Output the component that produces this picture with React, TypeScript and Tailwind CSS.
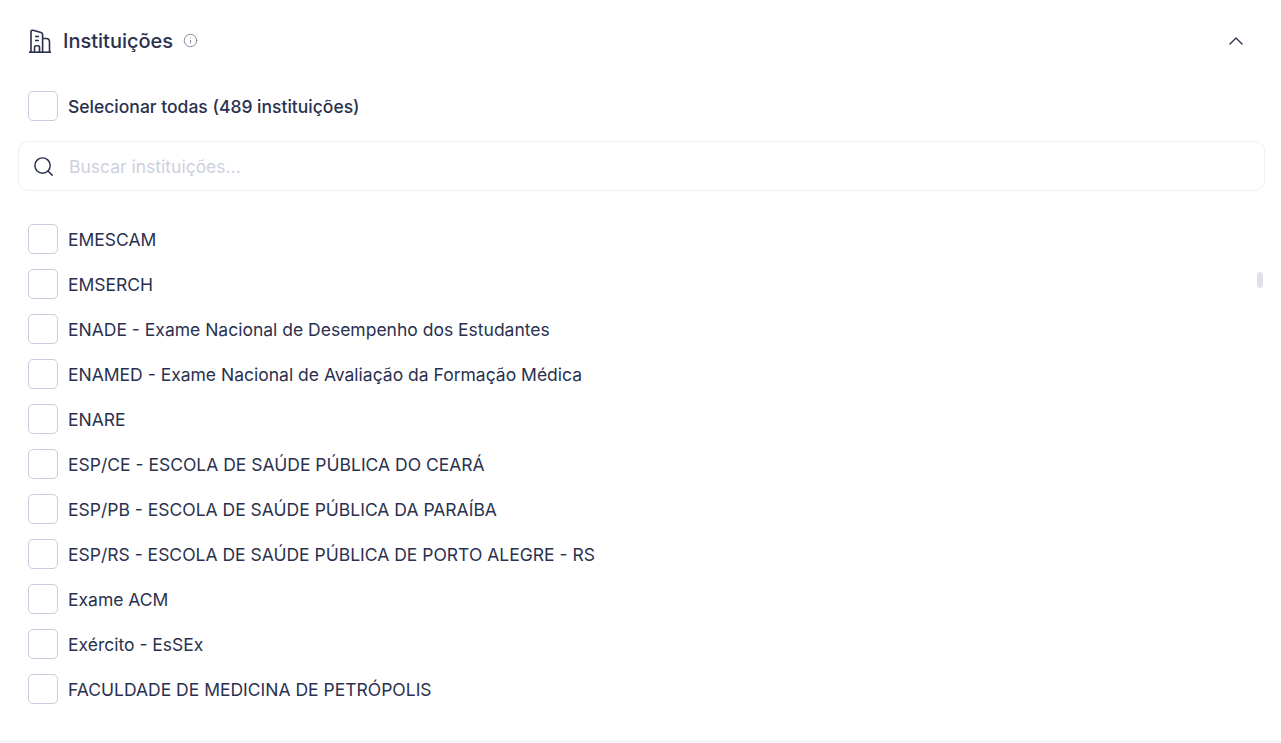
import { ChevronUp, Info, Search } from "lucide-react";

const institutions = [
  "EMESCAM",
  "EMSERCH",
  "ENADE - Exame Nacional de Desempenho dos Estudantes",
  "ENAMED - Exame Nacional de Avaliação da Formação Médica",
  "ENARE",
  "ESP/CE - ESCOLA DE SAÚDE PÚBLICA DO CEARÁ",
  "ESP/PB - ESCOLA DE SAÚDE PÚBLICA DA PARAÍBA",
  "ESP/RS - ESCOLA DE SAÚDE PÚBLICA DE PORTO ALEGRE - RS",
  "Exame ACM",
  "Exército - EsSEx",
  "FACULDADE DE MEDICINA DE PETRÓPOLIS",
];

function Box() {
  return <span className="h-[30px] w-[30px] shrink-0 rounded-[5px] border border-[#c9ccdc] bg-white" />;
}

function BuildingIcon() {
  return (
    <svg width="24" height="24" viewBox="0 0 24 24" fill="none" stroke="currentColor" strokeWidth="1.6" aria-hidden>
      <path d="M1 23.2h22" />
      <path d="M3 23V2.8C3 1.6 3.9 1 5 1.3l8 2.2c1 .3 1.6 1 1.6 2V23" />
      <path d="M14.6 9.5h3.6c2.2 0 3.3 1.5 3.3 3.5v10" />
      <path d="M7 7.5h4M7 11.5h4" />
      <path d="M6.5 23v-4.7c0-1 .7-1.6 1.6-1.6h1.8c.9 0 1.6.6 1.6 1.6V23" />
    </svg>
  );
}

export default function App() {
  return (
    <div className="flex h-[743px] flex-col overflow-hidden bg-white font-['Inter',sans-serif] text-[#2a314f]">
      <div className="relative flex-1 border-b border-[#eeeff3]">
        <header className="flex h-[82px] items-center pb-[1px] pl-[28px] pr-[33px]">
          <BuildingIcon />
          <h2 className="ml-[11px] text-[20px] font-medium">Instituições</h2>
          <Info className="ml-[10px] h-[15px] w-[15px] text-[#6b7186]" strokeWidth={1.25} aria-hidden />
          <ChevronUp className="ml-auto h-[24px] w-[24px]" strokeWidth={1.4} aria-hidden />
        </header>

        <label className="ml-[28px] mt-[9px] flex items-center gap-[10px]">
          <Box />
          <span className="pt-[2px] text-[17.5px] font-medium">Selecionar todas (489 instituições)</span>
        </label>

        <div className="ml-[18px] mr-[16px] mt-[20px] flex h-[50px] items-center rounded-[10px] border border-[#eeeff3] pl-[13px]">
          <Search className="h-[23px] w-[23px]" strokeWidth={1.5} aria-hidden />
          <span className="ml-[14px] pt-[2px] text-[17.5px] text-[#cdd0de]">Buscar instituições...</span>
        </div>

        <ul className="mt-[33px] flex flex-col gap-[15px] pl-[28px]">
          {institutions.map((name) => (
            <li key={name} className="flex items-center gap-[10px]">
              <Box />
              <span className="pt-[3px] text-[17.5px]">{name}</span>
            </li>
          ))}
        </ul>

        <div className="absolute right-[18px] top-[272px] h-[16px] w-[6px] rounded-full bg-[#dfe0e8]" />
      </div>
      <div className="h-[1px] shrink-0" />
    </div>
  );
}
